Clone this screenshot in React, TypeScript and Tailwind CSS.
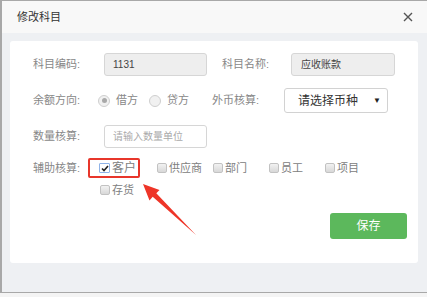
import React from 'react';

const font = { fontFamily: '"Liberation Sans", "Noto Sans CJK SC", sans-serif' };

const Radio: React.FC<{ checked?: boolean; label: string }> = ({ checked, label }) => (
  <div className="flex items-center">
    <span className="w-[12px] h-[12px] rounded-full border border-[#cfcfcf] bg-[#f1f1f1] flex items-center justify-center">
      {checked && <span className="w-[5px] h-[5px] rounded-full bg-[#a9a9a9]" />}
    </span>
    <span className="ml-[6px] text-[11px] text-[#888]">{label}</span>
  </div>
);

const Check: React.FC<{ checked?: boolean; label: string; width?: string }> = ({ checked, label, width = 'w-[56px]' }) => (
  <div className={`${width} h-[22px] flex items-center`}>
    {checked ? (
      <span className="w-[11px] h-[10px] rounded-[1px] border border-[#8fb3e8] bg-white flex items-center justify-center">
        <svg width="8" height="7" viewBox="0 0 8 7">
          <path d="M1 3.5 L3 5.5 L7 1" fill="none" stroke="#222" strokeWidth="1.6" />
        </svg>
      </span>
    ) : (
      <span className="w-[10px] h-[10px] rounded-[2px] border border-[#c2c2c2] bg-gradient-to-b from-[#f2f2f2] to-[#d8d8d8]" />
    )}
    <span className={`ml-[2px] text-[#808080] ${checked ? 'text-[12px]' : 'text-[11px]'}`}>{label}</span>
  </div>
);

export default function App() {
  return (
    <div className="w-[427px] h-[297px] bg-[#f4f4f4] flex flex-col" style={font}>
      <div className="h-[293px] border-l-2 border-t border-b border-[#a8a8a8] flex flex-col">
        <div className="h-[32px] bg-[#f8f8f8] flex items-center justify-between pl-[15px] pr-[14px] shrink-0">
          <span className="text-[11px] text-[#333]">修改科目</span>
          <svg width="10" height="10" viewBox="0 0 10 10">
            <path d="M1 1 L9 9 M9 1 L1 9" stroke="#555" strokeWidth="1.4" />
          </svg>
        </div>
        <div className="flex-1 bg-[#eef0f3] pt-[8px] px-[8px]">
          <div className="relative w-[408px] h-[222px] bg-white rounded-[3px] pt-[12px] pl-[23px] pr-[11px] flex flex-col">
            <div className="flex items-center h-[23px]">
              <span className="w-[71px] text-[11px] text-[#888]">科目编码:</span>
              <div className="w-[103px] h-[23px] bg-[#eeeeee] border border-[#d6d6d6] rounded-[3px] flex items-center pl-[8px] text-[10px] text-[#444]">1131</div>
              <span className="ml-[15px] w-[69px] text-[11px] text-[#888]">科目名称:</span>
              <div className="w-[104px] h-[23px] bg-[#eeeeee] border border-[#d6d6d6] rounded-[3px] flex items-center pl-[9px] text-[10px] text-[#444]">应收账款</div>
            </div>
            <div className="flex items-center h-[25px] mt-[12px]">
              <span className="w-[65px] text-[11px] text-[#888]">余额方向:</span>
              <Radio checked label="借方" />
              <div className="ml-[11px]">
                <Radio label="贷方" />
              </div>
              <span className="ml-[23px] w-[72px] text-[11px] text-[#888]">外币核算:</span>
              <div className="w-[104px] h-[25px] bg-white border border-[#d2d2d2] rounded-[3px] flex items-center justify-between pl-[13px] pr-[6px]">
                <span className="text-[12px] text-[#333]">请选择币种</span>
                <span className="text-[8px] text-[#222]">▼</span>
              </div>
            </div>
            <div className="flex items-center h-[23px] mt-[12px]">
              <span className="w-[71px] text-[11px] text-[#888]">数量核算:</span>
              <div className="w-[103px] h-[23px] bg-white border border-[#d6d6d6] rounded-[3px] flex items-center pl-[8px] text-[10px] text-[#aaa]">请输入数量单位</div>
            </div>
            <div className="flex items-start mt-[9px]">
              <span className="w-[66px] h-[22px] flex items-center text-[11px] text-[#888]">辅助核算:</span>
              <div className="w-[296px] flex flex-wrap">
                <div className="relative">
                  <Check checked label="客户" width="w-[58px]" />
                  <div className="absolute left-[-11px] top-[1px] w-[52px] h-[20px] border-2 border-[#e8362b] rounded-[2px]" />
                </div>
                <Check label="供应商" />
                <Check label="部门" />
                <Check label="员工" />
                <Check label="项目" />
                <div className="pl-[1px]">
                  <Check label="存货" />
                </div>
              </div>
            </div>
            <div className="flex justify-end mt-[12px]">
              <button className="w-[77px] h-[26px] bg-[#5cb85c] rounded-[3px] text-white text-[12px]">保存</button>
            </div>
            <svg className="absolute left-0 top-0 pointer-events-none" width="408" height="222" viewBox="10 41 408 222">
              <polygon points="143,184 159.5,190 156.3,193.3 196,235 152.7,196.8 149.5,200.5" fill="#ee3528" />
            </svg>
          </div>
        </div>
      </div>
    </div>
  );
}
